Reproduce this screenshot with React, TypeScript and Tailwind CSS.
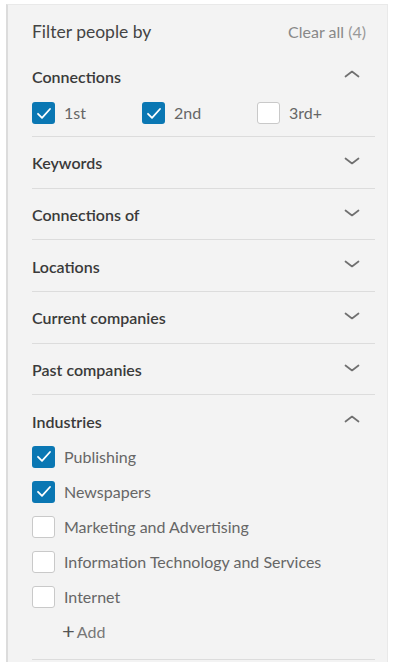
import React from 'react';

const font = { fontFamily: 'Lato, "Open Sans", "Liberation Sans", sans-serif' };

function Chevron({ up = false }: { up?: boolean }) {
  return (
    <svg width="16" height="8" viewBox="0 0 16 8" className="text-[#707070]">
      <path
        d={up ? 'M1.5 6.5 L8 1.5 L14.5 6.5' : 'M1.5 1.5 L8 6.5 L14.5 1.5'}
        fill="none"
        stroke="currentColor"
        strokeWidth="1.7"
        strokeLinecap="round"
        strokeLinejoin="round"
      />
    </svg>
  );
}

function Checkbox({ checked }: { checked: boolean }) {
  if (checked) {
    return (
      <span className="w-[23px] h-[22px] rounded-[3px] bg-[#0a77b3] flex items-center justify-center shrink-0">
        <svg width="16" height="13" viewBox="0 0 16 13">
          <path d="M2 6.8 L6 10.8 L14 2" fill="none" stroke="#ffffff" strokeWidth="1.8" strokeLinecap="round" strokeLinejoin="round" />
        </svg>
      </span>
    );
  }
  return <span className="w-[23px] h-[22px] rounded-[3px] bg-white border border-[#c9c9c9] shrink-0" />;
}

function CheckItem({ label, checked }: { label: string; checked: boolean }) {
  return (
    <div className="flex items-center gap-[9px]">
      <Checkbox checked={checked} />
      <span className="text-[16px] text-[#666]">{label}</span>
    </div>
  );
}

const collapsed = ['Keywords', 'Connections of', 'Locations', 'Current companies', 'Past companies'];

const industries = [
  { label: 'Publishing', checked: true },
  { label: 'Newspapers', checked: true },
  { label: 'Marketing and Advertising', checked: false },
  { label: 'Information Technology and Services', checked: false },
  { label: 'Internet', checked: false },
];

export default function App() {
  return (
    <div className="w-[400px] h-[672px] bg-white pt-[4px] pl-[6px] overflow-hidden" style={font}>
      <div className="w-[382px] h-[658px] bg-[#f3f3f3] border-t border-r border-[#e9e9e9] border-l-2 border-l-[#dcdcdc] pl-[24px] pr-[12px]">
        {/* Header */}
        <div className="h-[54px] flex items-center justify-between pr-[9px]">
          <span className="text-[17.5px] text-[#444]">Filter people by</span>
          <span className="text-[16px] text-[#888]">
            Clear all <span className="text-[#999]">(4)</span>
          </span>
        </div>

        {/* Connections */}
        <div className="border-b border-[#dcdcdc] pb-[5px]">
          <div className="h-[36px] flex items-center justify-between pr-[15px]">
            <span className="text-[16px] font-semibold text-[#3a3a3a]">Connections</span>
            <span className="-mt-[6px]"><Chevron up /></span>
          </div>
          <div className="h-[36px] flex items-center">
            <div className="w-[110px]"><CheckItem label="1st" checked /></div>
            <div className="w-[115px]"><CheckItem label="2nd" checked /></div>
            <div><CheckItem label="3rd+" checked={false} /></div>
          </div>
        </div>

        {collapsed.map((title) => (
          <div key={title} className="h-[51.7px] border-b border-[#dcdcdc] flex items-center justify-between pr-[15px]">
            <span className="text-[16px] font-semibold text-[#3a3a3a] mt-[2px]">{title}</span>
            <span className="-mt-[3px]"><Chevron /></span>
          </div>
        ))}

        {/* Industries */}
        <div className="border-b border-[#dcdcdc] pt-[9px] pb-[10px]">
          <div className="h-[35px] flex items-center justify-between pr-[15px]">
            <span className="text-[16px] font-semibold text-[#3a3a3a]">Industries</span>
            <span className="-mt-[6px]"><Chevron up /></span>
          </div>
          {industries.map((it) => (
            <div key={it.label} className="h-[35px] flex items-center">
              <CheckItem label={it.label} checked={it.checked} />
            </div>
          ))}
          <div className="h-[35px] flex items-center pl-[30px] gap-[2px]">
            <span className="text-[22px] leading-none text-[#555] -mt-[2px]">+</span>
            <span className="text-[16px] text-[#777]">Add</span>
          </div>
        </div>
      </div>
    </div>
  );
}
